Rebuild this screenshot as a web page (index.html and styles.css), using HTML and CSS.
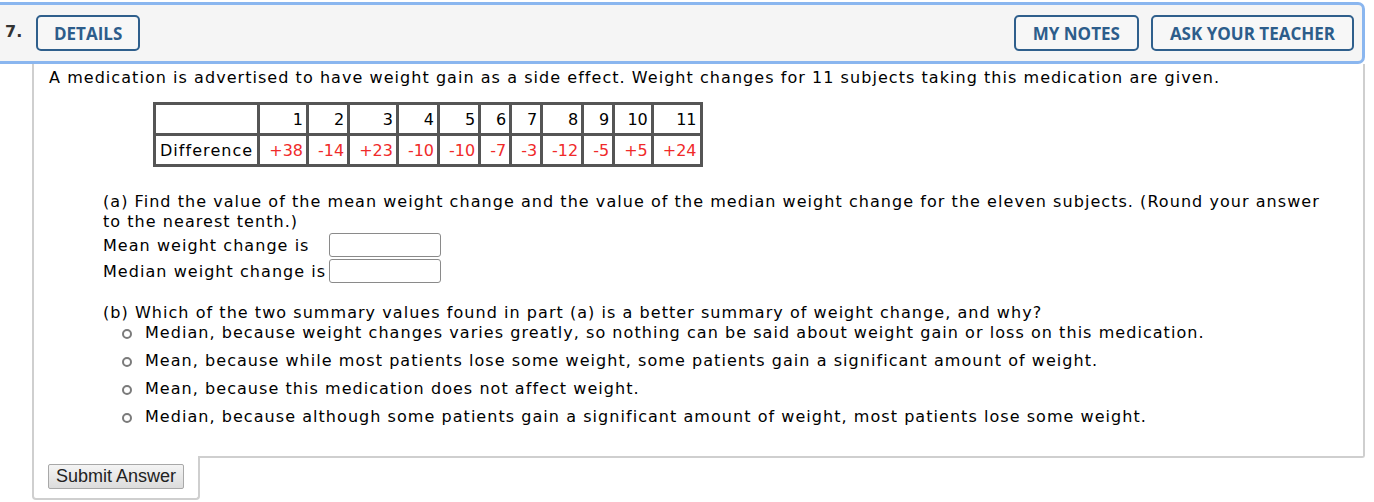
FILE: index.html
```html
<!DOCTYPE html>
<html>
<head>
<meta charset="utf-8">
<link rel="stylesheet" href="styles.css">
</head>
<body>
<div class="question">
  <div class="qhead">
    <span class="qnum">7.</span>
    <button class="hbtn btn-details">DETAILS</button>
    <span class="spacer"></span>
    <button class="hbtn btn-notes">MY NOTES</button>
    <button class="hbtn btn-ask">ASK YOUR TEACHER</button>
  </div>
  <div class="qbody">
    <p class="intro">A medication is advertised to have weight gain as a side effect. Weight changes for 11 subjects taking this medication are given.</p>
    <table class="data">
      <tr><td class="lab"></td><td>1</td><td>2</td><td>3</td><td>4</td><td>5</td><td>6</td><td>7</td><td>8</td><td>9</td><td>10</td><td>11</td></tr>
      <tr><td class="lab">Difference</td><td class="v">+38</td><td class="v">-14</td><td class="v">+23</td><td class="v">-10</td><td class="v">-10</td><td class="v">-7</td><td class="v">-3</td><td class="v">-12</td><td class="v">-5</td><td class="v">+5</td><td class="v">+24</td></tr>
    </table>
    <div class="part part-a">
      <p class="ptext">(a) Find the value of the mean weight change and the value of the median weight change for the eleven subjects. (Round your answer to the nearest tenth.)</p>
      <div class="answers">
        <span class="alabel">Mean weight change is</span><input type="text" class="box">
        <span class="alabel">Median weight change is</span><input type="text" class="box">
      </div>
    </div>
    <div class="part part-b">
      <p class="ptext">(b) Which of the two summary values found in part (a) is a better summary of weight change, and why?</p>
      <ul class="opts">
        <li><span class="radio"></span>Median, because weight changes varies greatly, so nothing can be said about weight gain or loss on this medication.</li>
        <li><span class="radio"></span>Mean, because while most patients lose some weight, some patients gain a significant amount of weight.</li>
        <li><span class="radio"></span>Mean, because this medication does not affect weight.</li>
        <li><span class="radio"></span>Median, because although some patients gain a significant amount of weight, most patients lose some weight.</li>
      </ul>
    </div>
  </div>
  <div class="submit-area">
    <button class="submit">Submit Answer</button>
  </div>
</div>
</body>
</html>
```
FILE: styles.css
```css
html, body {
  margin: 0;
  padding: 0;
  background: #ffffff;
}
body {
  font-family: "DejaVu Sans", Verdana, sans-serif;
  font-size: 16px;
  letter-spacing: 1.05px;
  color: #000;
}
.question {
  padding-top: 2px;
  width: 1365px;
}
.qhead {
  display: flex;
  align-items: center;
  height: 56px;
  margin-left: -20px;
  padding-left: 22px;
  padding-right: 8px;
  background: #f5f5f5;
  border: 3px solid #8ab6ef;
  border-radius: 0 7px 7px 0;
  letter-spacing: 0;
}
.qnum {
  font-family: "DejaVu Sans", Verdana, sans-serif;
  font-weight: bold;
  font-size: 16px;
  color: #333;
  width: 31px;
  margin-top: -3px;
}
.spacer { flex: 1; }
.hbtn {
  font-family: "Open Sans", sans-serif;
  font-weight: 700;
  font-size: 17px;
  color: #2d5d8b;
  background: #f7f7f7;
  border: 2px solid #2f5f8c;
  border-radius: 5px;
  height: 36px;
  padding: 0 16px;
  margin-left: 12px;
}
.btn-details { margin-left: 0; padding: 0 16px; }
.btn-notes { padding: 0 17px; }
.btn-ask { padding: 0 17px; }
.qbody {
  margin-left: 32px;
  border: 2px solid #cfcfcf;
  border-top: none;
  border-radius: 0 0 3px 0;
  padding: 4px 15px 29px 15px;
}
.intro {
  margin: 0;
  line-height: 20px;
}
.data {
  margin: 14px 0 0 104px;
  border-collapse: collapse;
  border: 3px solid #555;
}
.data td {
  border: 3px solid #555;
  height: 27px;
  padding: 1px 3px 0 9px;
  text-align: right;
  line-height: 20px;
  letter-spacing: 0;
}
.data td.lab { text-align: left; padding: 1px 4px 0; letter-spacing: 1.05px; }
.data td.v { color: #f02a2a; }
.part { margin-left: 54px; }
.part-a { margin-top: 25px; margin-right: 12px; }
.part-b { margin-top: 19px; }
.ptext { margin: 0; line-height: 20px; }
.answers {
  display: grid;
  grid-template-columns: 226px 112px;
  grid-auto-rows: 26px;
  align-items: center;
}
.box {
  box-sizing: border-box;
  width: 112px;
  height: 24px;
  margin: 0;
  border: 1px solid #8a8a8a;
  border-radius: 3px;
  background: #fff;
}
.opts {
  list-style: none;
  margin: 0;
  padding: 0 0 0 19px;
}
.opts li {
  line-height: 20px;
  margin-top: 8px;
  display: flex;
  align-items: center;
}
.opts li:first-child { margin-top: 0; }
.radio {
  box-sizing: border-box;
  width: 10px;
  height: 10px;
  border: 2px solid #7b7b7b;
  border-radius: 50%;
  margin-right: 13px;
  margin-top: 1px;
  flex: none;
}
.submit-area {
  margin-left: 32px;
  width: 168px;
  margin-top: -2px;
  background: #fff;
  border: 2px solid #cfcfcf;
  border-top: none;
  border-radius: 0 0 4px 4px;
  padding: 8px 0 8px 14px;
  box-sizing: border-box;
  height: 44px;
}
.submit {
  font-family: "Liberation Sans", Arial, sans-serif;
  font-size: 18px;
  letter-spacing: 0;
  color: #222;
  height: 25px;
  padding: 0 7px;
  border: 1px solid #a8a8a8;
  border-radius: 2px;
  background: linear-gradient(#f4f4f4, #dcdcdc);
  display: block;
}
```
